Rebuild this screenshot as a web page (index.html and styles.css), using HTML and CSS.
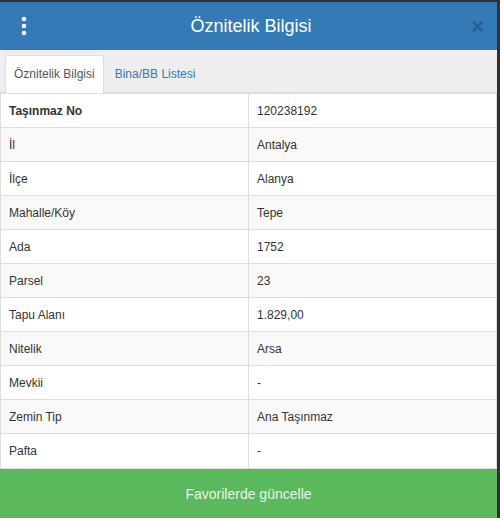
FILE: index.html
```html
<!DOCTYPE html>
<html lang="tr">

<head>
  <meta charset="UTF-8" />
  <title>Öznitelik Bilgisi</title>
  <link rel="stylesheet" href="styles.css">
</head>

<body>
  <div class="panel">
    <!-- başlık -->
    <div class="header">
      <span class="menu">
        <svg width="6" height="20" viewBox="0 0 6 20">
          <circle cx="3" cy="3" r="2.3" fill="#fff" />
          <circle cx="3" cy="10" r="2.3" fill="#fff" />
          <circle cx="3" cy="17" r="2.3" fill="#fff" />
        </svg>
      </span>
      <h3>Öznitelik Bilgisi</h3>
      <span class="close">&times;</span>
    </div>
    <!-- sekmeler -->
    <ul class="tabs">
      <li class="active">Öznitelik Bilgisi</li>
      <li>Bina/BB Listesi</li>
    </ul>
    <table class="attrs">
      <tr><th>Taşınmaz No</th><td>120238192</td></tr>
      <tr><td>İl</td><td>Antalya</td></tr>
      <tr><td>İlçe</td><td>Alanya</td></tr>
      <tr><td>Mahalle/Köy</td><td>Tepe</td></tr>
      <tr><td>Ada</td><td>1752</td></tr>
      <tr><td>Parsel</td><td>23</td></tr>
      <tr><td>Tapu Alanı</td><td>1.829,00</td></tr>
      <tr><td>Nitelik</td><td>Arsa</td></tr>
      <tr><td>Mevkii</td><td>-</td></tr>
      <tr><td>Zemin Tip</td><td>Ana Taşınmaz</td></tr>
      <tr class="last"><td>Pafta</td><td>-</td></tr>
    </table>
    <div class="btn">Favorilerde güncelle</div>
  </div>
</body>

</html>
```

FILE: styles.css
```css
body {
  margin: 0;
  padding: 0;
  background-color: #2f3338;
  font-family: "Liberation Sans", Arial, sans-serif;
}

.panel {
  width: 497px;
  height: 516px;
  margin-top: 2px;
  background-color: #fff;
  display: flex;
  flex-direction: column;
}

.header {
  height: 48px;
  background-color: #337ab7;
  display: flex;
  align-items: center;
  padding: 0 13px 0 21px;
}

.header h3 {
  flex: 1;
  margin: 0;
  text-align: center;
  color: #fff;
  font-size: 18px;
  font-weight: normal;
  padding-left: 4px;
}

.menu {
  display: flex;
  width: 6px;
}

.close {
  color: #1f4f7a;
  opacity: 0.6;
  font-size: 22px;
  font-weight: bold;
  line-height: 1;
  margin-top: 2px;
}

.tabs {
  list-style: none;
  margin: 0;
  padding: 5px 0 0 5px;
  height: 37px;
  background-color: #eee;
  border-bottom: 1px solid #ddd;
  display: flex;
}

.tabs li {
  font-size: 12px;
  color: #337ab7;
  padding: 0 8px;
  line-height: 36px;
  border: 1px solid transparent;
  border-bottom: none;
  margin-right: 2px;
}

.tabs li.active {
  color: #555;
  background-color: #fff;
  border-color: #ddd;
  border-radius: 3px 3px 0 0;
  height: 37px;
}

.attrs {
  width: 497px;
  border-collapse: collapse;
  font-size: 12px;
  color: #333;
}

.attrs th,
.attrs td {
  height: 33px;
  padding: 0 8px;
  border: 1px solid #ddd;
  text-align: left;
  width: 232px;
}

.attrs .last td {
  height: 34px;
}

.attrs th {
  font-weight: bold;
}

.attrs tr:nth-child(even) {
  background-color: #f9f9f9;
}

.btn {
  flex: 1;
  background-color: #5cb85c;
  color: #eaf6ea;
  font-size: 14px;
  display: flex;
  align-items: center;
  justify-content: center;
}
```
